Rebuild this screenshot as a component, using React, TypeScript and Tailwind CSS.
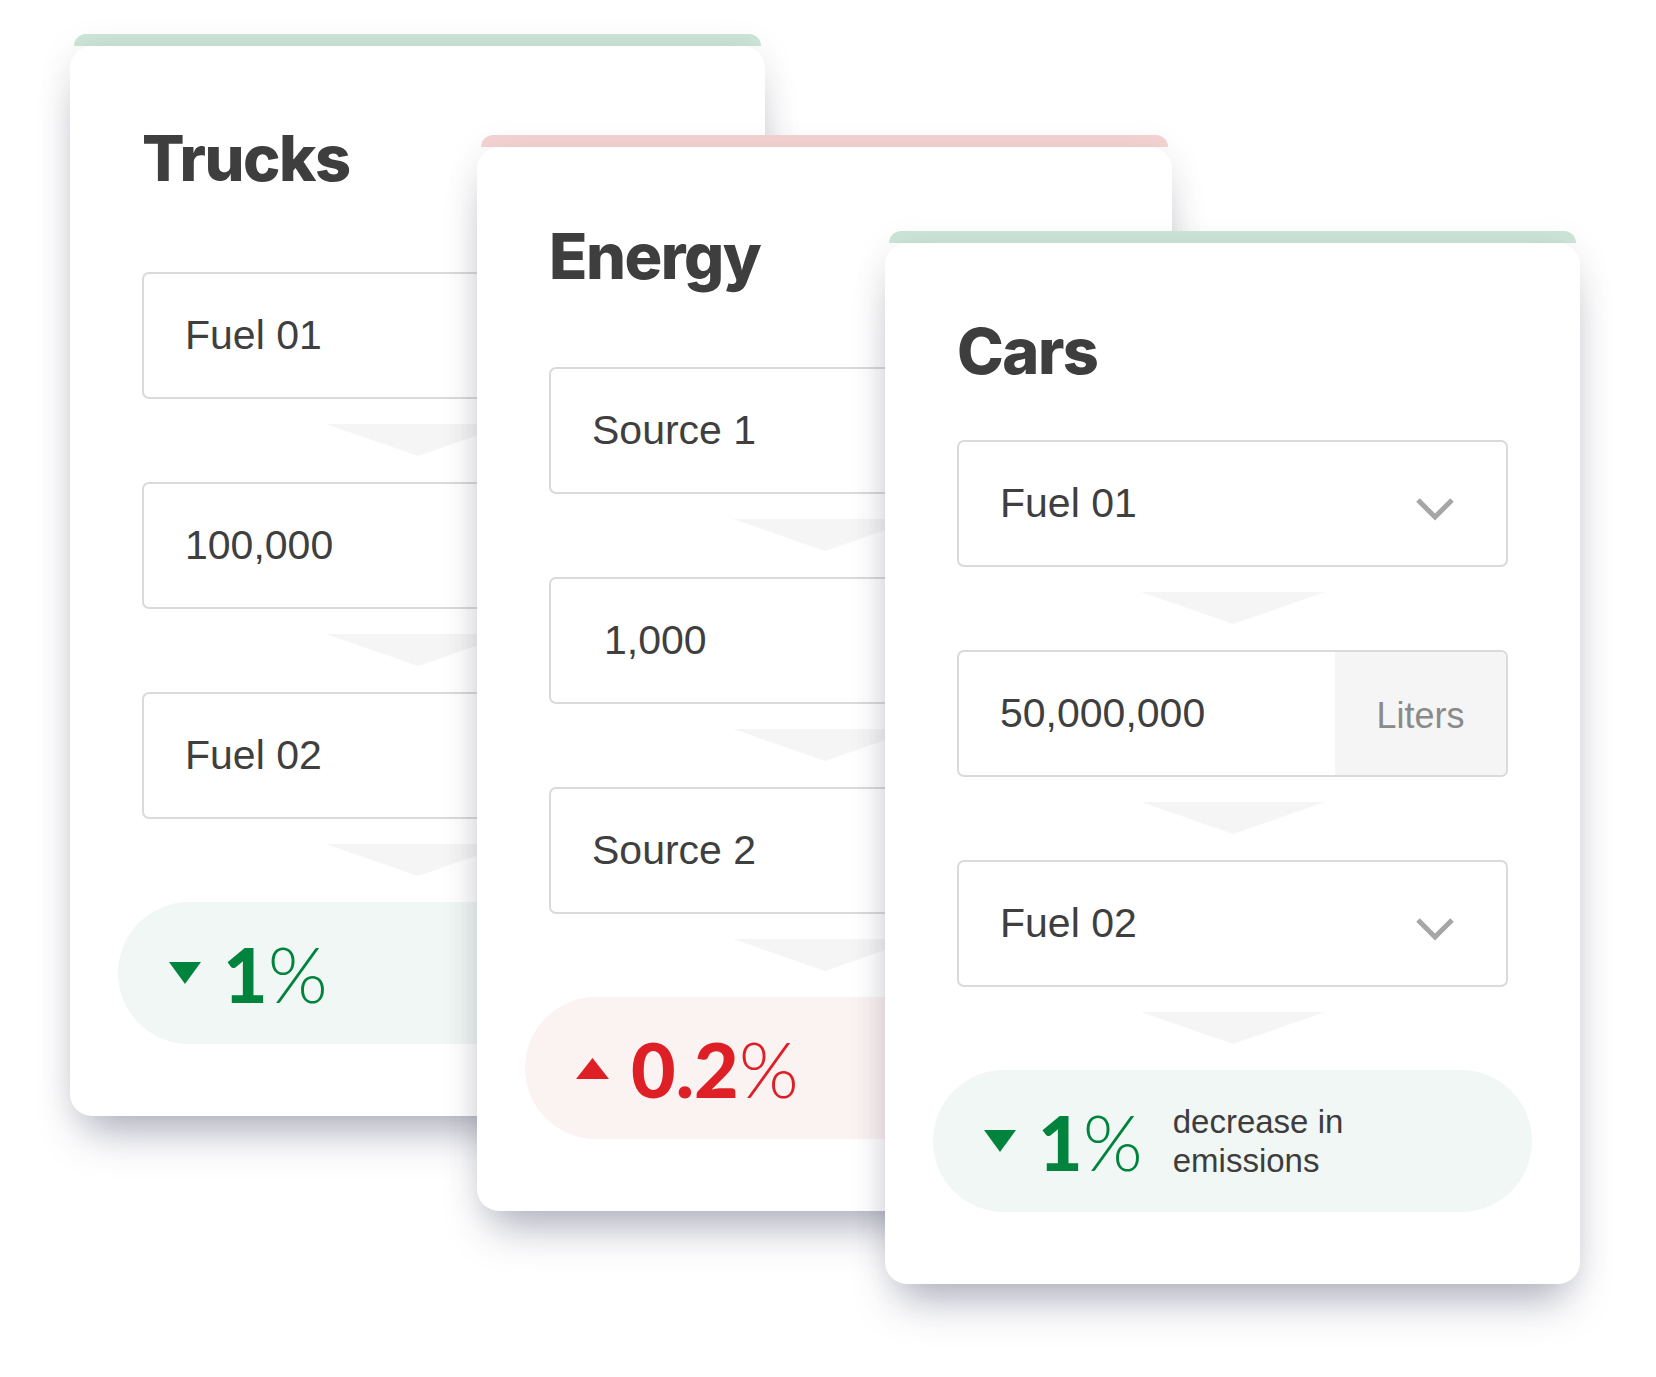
import React from "react";

type Field =
  | { kind: "select"; label: string }
  | { kind: "number"; value: string; unit?: string; pad: string };

type Stat = { dir: "down" | "up"; whole: string; note?: boolean };

type CardData = {
  title: string;
  band: string;
  place: string;
  bodyPad: string;
  titleGap: string;
  fields: Field[];
  stat: Stat;
};

const cards: CardData[] = [
  {
    title: "Trucks",
    band: "bg-[#cde6d9]",
    place: "z-10",
    bodyPad: "pt-[78px]",
    titleGap: "mb-[80px]",
    fields: [
      { kind: "select", label: "Fuel 01" },
      { kind: "number", value: "100,000", unit: "Liters", pad: "pl-[41px]" },
      { kind: "select", label: "Fuel 02" },
    ],
    stat: { dir: "down", whole: "1" },
  },
  {
    title: "Energy",
    band: "bg-[#f7d4d4]",
    place: "z-20 -ml-[288px] mt-[101px]",
    bodyPad: "pt-[75px]",
    titleGap: "mb-[77px]",
    fields: [
      { kind: "select", label: "Source 1" },
      { kind: "number", value: "1,000", unit: "kWh", pad: "pl-[53px]" },
      { kind: "select", label: "Source 2" },
    ],
    stat: { dir: "up", whole: "0.2" },
  },
  {
    title: "Cars",
    band: "bg-[#cde6d9]",
    place: "z-30 -ml-[287px] mt-[197px]",
    bodyPad: "pt-[74px]",
    titleGap: "mb-[55px]",
    fields: [
      { kind: "select", label: "Fuel 01" },
      { kind: "number", value: "50,000,000", unit: "Liters", pad: "pl-[41px]" },
      { kind: "select", label: "Fuel 02" },
    ],
    stat: { dir: "down", whole: "1", note: true },
  },
];

const Chevron = () => (
  <svg width="40" height="24" viewBox="0 0 40 24" className="mt-[10px]">
    <polyline points="3,3 20,20 37,3" fill="none" stroke="#a6a6a6" strokeWidth="5" />
  </svg>
);

const FlowArrow = () => (
  <div className="h-[83px] flex justify-center pt-[25px]">
    <svg width="184" height="32" viewBox="0 0 184 32">
      <polygon points="0,0 184,0 92,32" fill="#f5f5f5" />
    </svg>
  </div>
);

const FieldBox = ({ field }: { field: Field }) => {
  if (field.kind === "select") {
    return (
      <div className="h-[127px] rounded-[7px] border-2 border-[#dadada] bg-white flex items-center justify-between pl-[41px] pr-[51px]">
        <span className="text-[41px] text-[#3f3f3f]">{field.label}</span>
        <Chevron />
      </div>
    );
  }
  return (
    <div className="h-[127px] rounded-[7px] border-2 border-[#dadada] bg-white flex items-stretch overflow-hidden">
      <div className={`flex-1 flex items-center ${field.pad}`}>
        <span className="text-[41px] text-[#3f3f3f]">{field.value}</span>
      </div>
      <div className="w-[171px] bg-[#f5f5f5] flex items-center justify-center pt-[4px]">
        <span className="text-[36px] text-[#8a8a8a]">{field.unit}</span>
      </div>
    </div>
  );
};

const StatPill = ({ stat }: { stat: Stat }) => {
  const down = stat.dir === "down";
  return (
    <div
      className={`-mx-[24px] h-[142px] rounded-full flex items-center pl-[51px] ${
        down ? "bg-[#f1f7f4] text-[#00843d]" : "bg-[#fbf2f2] text-[#df1f26]"
      }`}
    >
      {down ? (
        <svg width="32" height="22" viewBox="0 0 32 22">
          <polygon points="0,0 32,0 16,22" fill="#00843d" />
        </svg>
      ) : (
        <svg width="33" height="21" viewBox="0 0 33 21">
          <polygon points="16.5,0 33,21 0,21" fill="#df1f26" />
        </svg>
      )}
      <div className="ml-[22px] flex items-baseline font-['Lato',sans-serif] text-[77px] leading-none">
        <span className="font-black">{stat.whole}</span>
        <span className="font-light">%</span>
      </div>
      {stat.note && (
        <p className="ml-[30px] text-[33px] leading-[39px] text-[#3d3d3d]">
          decrease in
          <br />
          emissions
        </p>
      )}
    </div>
  );
};

const Card = ({ data }: { data: CardData }) => (
  <div className={`relative shrink-0 w-[695px] flex flex-col ${data.place}`}>
    <div className={`h-[12px] mx-[4px] rounded-t-[20px] ${data.band}`} />
    <div
      className={`bg-white rounded-[22px] px-[72px] pb-[72px] shadow-[0_28px_44px_-14px_rgba(45,50,85,0.38),0_0_36px_rgba(0,0,0,0.07)] ${data.bodyPad}`}
    >
      <h2
        className={`font-['Inter',sans-serif] font-extrabold text-[63px] leading-[68px] text-[#3e3e3e] tracking-[-1.5px] ${data.titleGap}`}
      >
        {data.title}
      </h2>
      {data.fields.map((f, i) => (
        <div key={i}>
          <FieldBox field={f} />
          <FlowArrow />
        </div>
      ))}
      <StatPill stat={data.stat} />
    </div>
  </div>
);

export default function App() {
  return (
    <div className="w-[1656px] h-[1377px] bg-white overflow-hidden font-['Liberation_Sans',Arial,sans-serif]">
      <div className="flex items-start pl-[70px] pt-[34px]">
        {cards.map((c) => (
          <Card key={c.title} data={c} />
        ))}
      </div>
    </div>
  );
}
